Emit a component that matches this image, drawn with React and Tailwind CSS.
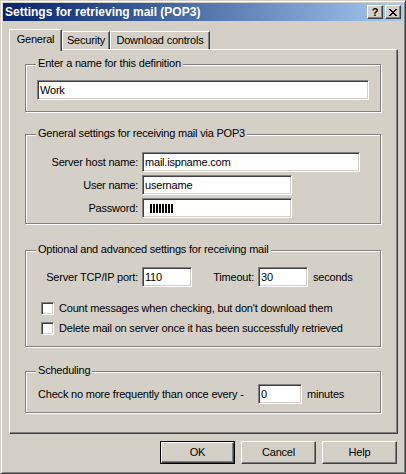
import React from 'react';

const raised =
  'border border-t-white border-l-white border-r-[#404040] border-b-[#404040] shadow-[inset_-1px_-1px_0_#808080]';
const sunken =
  'bg-white border border-t-[#808080] border-l-[#808080] border-r-white border-b-white shadow-[inset_1px_1px_0_#404040,inset_-1px_-1px_0_#d4d0c8]';

function Group({ label, className, children }) {
  return (
    <div
      className={`relative ml-[15px] w-[356px] border border-[#808080] shadow-[inset_1px_1px_0_#fff,1px_1px_0_#fff] ${className}`}
    >
      <span className="absolute left-[10px] top-[-8px] bg-[#d4d0c8] px-[2px] leading-[13px]">{label}</span>
      {children}
    </div>
  );
}

function Field({ value, className }) {
  return (
    <div className={`${sunken} flex h-[20px] items-center pl-[2px] leading-[13px] ${className}`}>{value}</div>
  );
}

function Check({ label, className }) {
  return (
    <div className={`flex items-center gap-[5px] ${className}`}>
      <div className={`${sunken} h-[13px] w-[13px]`} />
      <span className="leading-[13px]">{label}</span>
    </div>
  );
}

function Button({ label, primary }) {
  return (
    <button
      className={
        'h-[23px] w-[75px] bg-[#d4d0c8] text-center leading-[13px] ' + (primary ? 'border border-black' : '')
      }
    >
      <div className={`${raised} flex h-full w-full items-center justify-center`}>{label}</div>
    </button>
  );
}

export default function App() {
  return (
    <div className="h-[474px] w-[406px] border border-t-[#d4d0c8] border-l-[#d4d0c8] border-r-[#404040] border-b-[#404040] bg-[#d4d0c8] p-[2px] font-['Liberation_Sans',Arial,sans-serif] text-[11px] tracking-[-0.2px] text-black shadow-[inset_1px_1px_0_#fff,inset_-1px_-1px_0_#808080]">
      {/* title bar */}
      <div className="flex h-[18px] items-center bg-gradient-to-r from-[#0a246a] to-[#a6caf0] pl-[2px] pr-[2px]">
        <span className="flex-1 text-[12px] font-bold leading-[14px] tracking-normal text-white">
          Settings for retrieving mail (POP3)
        </span>
        <div className={`${raised} flex h-[14px] w-[16px] items-center justify-center bg-[#d4d0c8] text-[11px] font-bold leading-none`}>
          ?
        </div>
        <div className={`${raised} ml-[2px] flex h-[14px] w-[16px] items-center justify-center bg-[#d4d0c8]`}>
          <svg width="8" height="7" viewBox="0 0 8 7" shapeRendering="crispEdges">
            <path d="M0 0h2v1h-2zM6 0h2v1h-2zM1 1h2v1h-2zM5 1h2v1h-2zM2 2h4v1h-4zM3 3h2v1h-2zM2 4h4v1h-4zM1 5h2v1h-2zM5 5h2v1h-2zM0 6h2v1h-2zM6 6h2v1h-2z" fill="#000" />
          </svg>
        </div>
      </div>

      <div className="pl-[6px] pr-[5px] pt-[8px]">
        {/* tabs */}
        <div className="flex h-[20px] items-end">
          <div className="relative z-10 -mb-[2px] flex h-[22px] w-[53px] items-center justify-center border-l border-t border-r border-l-white border-t-white border-r-[#404040] bg-[#d4d0c8] pb-[3px] shadow-[inset_-1px_0_0_#808080]">
            General
          </div>
          <div className="flex h-[18px] w-[48px] items-center justify-center border-l border-t border-r border-l-white border-t-white border-r-[#404040] shadow-[inset_-1px_0_0_#808080]">
            Security
          </div>
          <div className="flex h-[18px] w-[100px] items-center justify-center border-l border-t border-r border-l-white border-t-white border-r-[#404040] shadow-[inset_-1px_0_0_#808080]">
            Download controls
          </div>
        </div>

        {/* tab panel */}
        <div className={`${raised} h-[385px] w-[389px] pt-[14px]`}>
          <Group label="Enter a name for this definition" className="px-[11px] pb-[11px] pt-[15px]">
            <Field value="Work" className="w-[332px]" />
          </Group>

          <Group label="General settings for receiving mail via POP3" className="mt-[22px] pb-[5px] pt-[17px]">
            <div className="grid grid-cols-[112px_auto] items-center gap-x-[4px] gap-y-[3px]">
              <span className="text-right">Server host name:</span>
              <Field value="mail.ispname.com" className="w-[218px]" />
              <span className="text-right">User name:</span>
              <Field value="username" className="w-[150px]" />
              <span className="text-right">Password:</span>
              <Field
                className="w-[150px] pl-[7px]"
                value={
                  <div className="flex gap-[1px]">
                    {Array.from({ length: 8 }).map((_, i) => (
                      <div key={i} className="h-[9px] w-[2px] bg-black" />
                    ))}
                  </div>
                }
              />
            </div>
          </Group>

          <Group label="Optional and advanced settings for receiving mail" className="mt-[26px] pb-[11px] pt-[16px]">
            <div className="flex items-center">
              <span className="w-[112px] text-right">Server TCP/IP port:</span>
              <Field value="110" className="ml-[4px] w-[50px]" />
              <span className="w-[62px] text-right">Timeout:</span>
              <Field value="30" className="ml-[4px] w-[50px]" />
              <span className="ml-[5px]">seconds</span>
            </div>
            <Check className="ml-[15px] mt-[15px]" label="Count messages when checking, but don't download them" />
            <Check className="ml-[15px] mt-[7px]" label="Delete mail on server once it has been successfully retrieved" />
          </Group>

          <Group label="Scheduling" className="mt-[24px] pb-[8px] pl-[12px] pt-[12px]">
            <div className="flex items-center">
              <span className="w-[220px]">Check no more frequently than once every -</span>
              <Field value="0" className="w-[44px]" />
              <span className="ml-[5px]">minutes</span>
            </div>
          </Group>
        </div>

        {/* buttons */}
        <div className="mt-[7px] flex justify-end gap-[6px] pr-[1px]">
          <Button label="OK" primary />
          <Button label="Cancel" />
          <Button label="Help" />
        </div>
      </div>
    </div>
  );
}
